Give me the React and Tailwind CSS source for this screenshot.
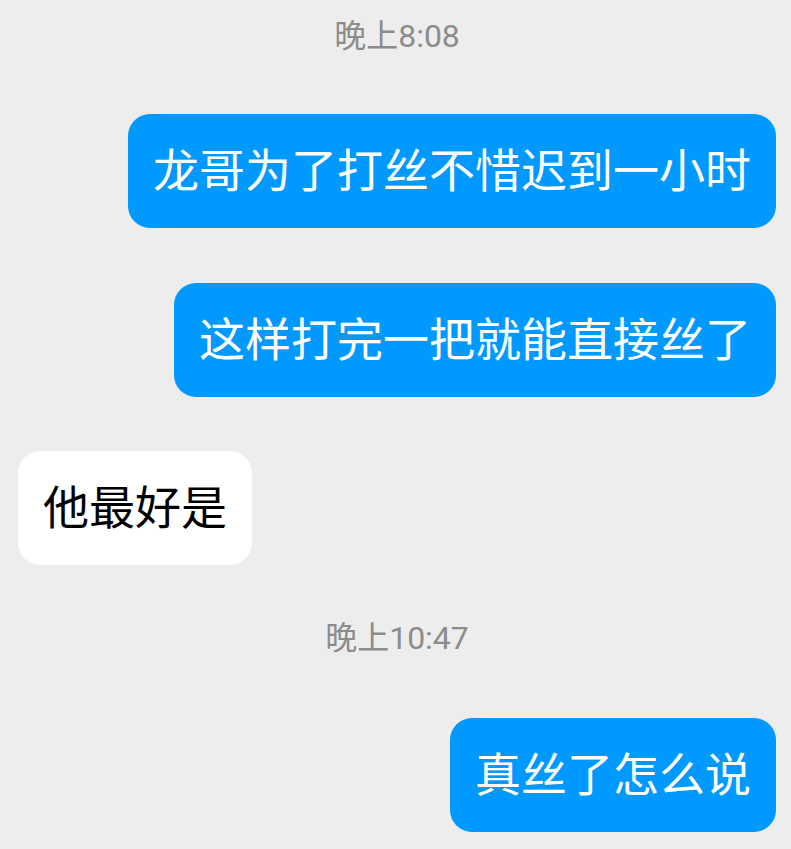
import React from 'react';

const messages = [
  { type: 'time', text: '晚上8:08', mt: 'mt-[16px]' },
  { type: 'me', text: '龙哥为了打丝不惜迟到一小时', mt: 'mt-[58px]' },
  { type: 'me', text: '这样打完一把就能直接丝了', mt: 'mt-[55px]' },
  { type: 'other', text: '他最好是', mt: 'mt-[54px]' },
  { type: 'time', text: '晚上10:47', mt: 'mt-[53px]' },
  { type: 'me', text: '真丝了怎么说', mt: 'mt-[60px]' },
];

export default function App() {
  return (
    <div
      className="min-h-screen w-full bg-[#ededed] pl-[18px] pr-[15px] pb-8 flex flex-col"
      style={{ fontFamily: 'Roboto, "Noto Sans CJK SC", sans-serif' }}
    >
      {messages.map((m, i) => {
        if (m.type === 'time') {
          return (
            <div key={i} className={`${m.mt} text-center text-[32px] leading-[40px] text-[#8c8c8c]`}>
              {m.text}
            </div>
          );
        }
        const mine = m.type === 'me';
        return (
          <div key={i} className={`${m.mt} flex ${mine ? 'justify-end' : 'justify-start'}`}>
            <div
              className={`rounded-[22px] px-[25px] py-[24px] text-[46px] leading-[66px] whitespace-nowrap ${
                mine ? 'bg-[#0099ff] text-white' : 'bg-white text-black'
              }`}
            >
              {m.text}
            </div>
          </div>
        );
      })}
    </div>
  );
}
